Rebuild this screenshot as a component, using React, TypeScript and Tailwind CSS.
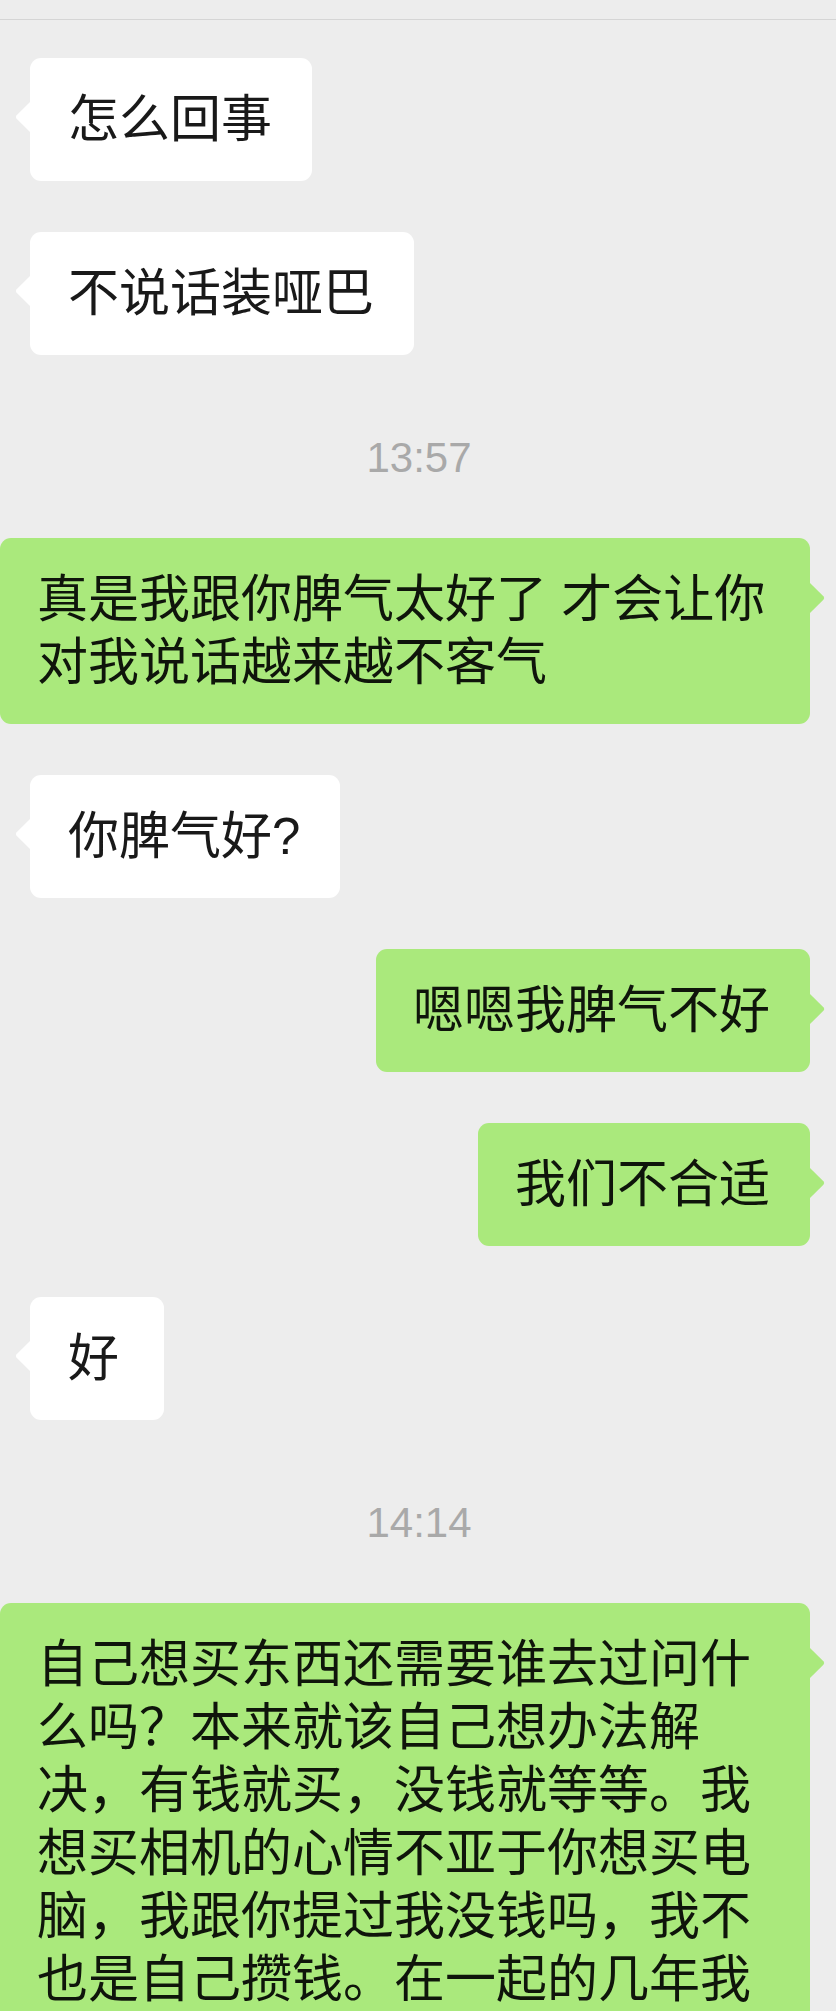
type Side = 'left' | 'right';

interface Bubble {
  kind: 'msg';
  side: Side;
  text: string;
}

interface Stamp {
  kind: 'time';
  text: string;
}

type Item = Bubble | Stamp;

const items: Item[] = [
  { kind: 'msg', side: 'left', text: '怎么回事' },
  { kind: 'msg', side: 'left', text: '不说话装哑巴' },
  { kind: 'time', text: '13:57' },
  { kind: 'msg', side: 'right', text: '真是我跟你脾气太好了 才会让你对我说话越来越不客气' },
  { kind: 'msg', side: 'left', text: '你脾气好?' },
  { kind: 'msg', side: 'right', text: '嗯嗯我脾气不好' },
  { kind: 'msg', side: 'right', text: '我们不合适' },
  { kind: 'msg', side: 'left', text: '好' },
  { kind: 'time', text: '14:14' },
  {
    kind: 'msg',
    side: 'right',
    text: '自己想买东西还需要谁去过问什么吗？本来就该自己想办法解决，有钱就买，没钱就等等。我想买相机的心情不亚于你想买电脑，我跟你提过我没钱吗，我不也是自己攒钱。在一起的几年我',
  },
];

function Tail({ side }: { side: Side }) {
  if (side === 'left') {
    return (
      <svg
        className="absolute top-[43px] -left-[15px]"
        width="16"
        height="32"
        viewBox="0 0 16 32"
      >
        <path d="M16 0 L1.6 14.2 Q0 16 1.6 17.8 L16 32 Z" fill="#ffffff" />
      </svg>
    );
  }
  return (
    <svg
      className="absolute top-[44px] -right-[15px]"
      width="16"
      height="32"
      viewBox="0 0 16 32"
    >
      <path d="M0 0 L14.4 14.2 Q16 16 14.4 17.8 L0 32 Z" fill="#aae97c" />
    </svg>
  );
}

function Message({ side, text }: { side: Side; text: string }) {
  const left = side === 'left';
  return (
    <div className={left ? 'flex justify-start pl-[30px] pr-[26px]' : 'flex justify-end pr-[26px]'}>
      <div
        className={
          left
            ? 'relative min-w-[134px] max-w-[780px] rounded-[11px] bg-white pl-[38px] pr-[40px] py-[30px] text-[#191919]'
            : 'relative max-w-[810px] rounded-[11px] bg-[#aae97c] pl-[37px] pr-[40px] py-[30px] text-[#0f150b]'
        }
      >
        <Tail side={side} />
        <p className="text-[51px] leading-[63px] break-words">{text}</p>
      </div>
    </div>
  );
}

function TimeStamp({ text }: { text: string }) {
  return (
    <div className="mt-[82px] mb-[59px] flex justify-center">
      <span className="font-['Liberation_Sans',Arial,sans-serif] text-[42px] leading-[42px] text-[#a9a9a9] pl-[2px]">
        {text}
      </span>
    </div>
  );
}

export default function App() {
  return (
    <div
      lang="zh-CN"
      className="h-[2011px] w-[836px] overflow-hidden bg-[#ededed] font-['Liberation_Sans','Noto_Sans_CJK_SC',sans-serif]"
    >
      <div className="h-[19px]" />
      <div className="h-[1px] bg-[#d5d5d5]" />
      <div className="pt-[38px] flex flex-col">
        {items.map((item, i) => {
          if (item.kind === 'time') {
            return <TimeStamp key={i} text={item.text} />;
          }
          const prev = items[i - 1];
          const spaced = i > 0 && prev.kind === 'msg';
          return (
            <div key={i} className={spaced ? 'mt-[51px]' : ''}>
              <Message side={item.side} text={item.text} />
            </div>
          );
        })}
      </div>
    </div>
  );
}
